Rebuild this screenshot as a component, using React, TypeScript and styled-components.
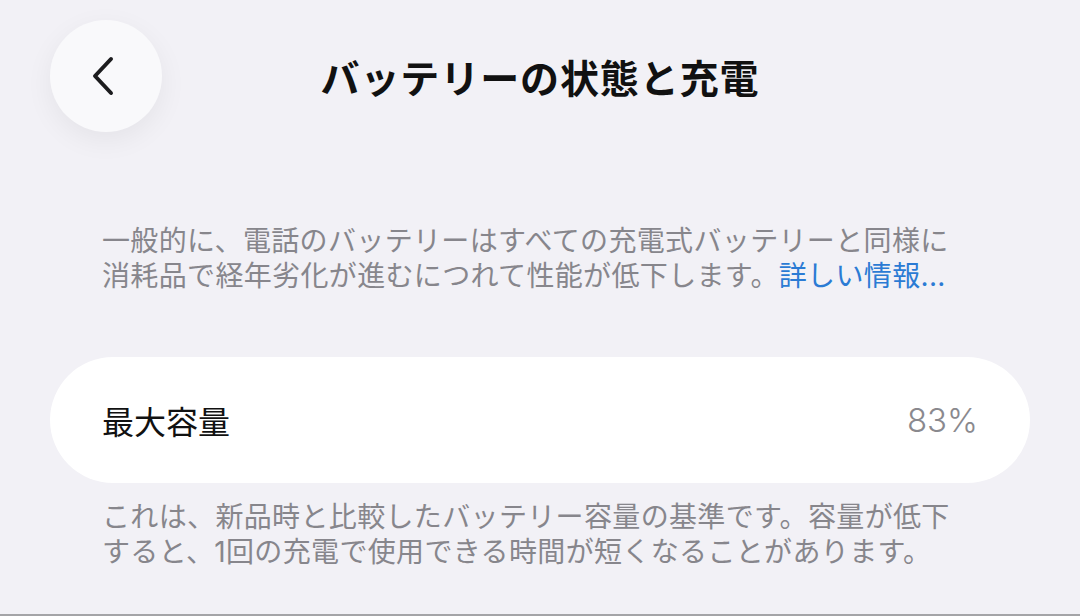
import { createGlobalStyle, styled } from "styled-components";

const GlobalStyle = createGlobalStyle`
  html, body {
    margin: 0;
    padding: 0;
    background: #f2f1f6;
  }
  body {
    font-family: "Inter", "Noto Sans CJK JP", sans-serif;
    -webkit-font-smoothing: antialiased;
  }
`;

const Page = styled.div`
  height: 100vh;
  box-sizing: border-box;
  border-bottom: 2px solid #a4a4a7;
  display: flex;
  flex-direction: column;
  padding: 20px 50px 0;
`;

const Header = styled.header`
  display: grid;
  grid-template-columns: 112px 1fr 112px;
  align-items: center;
`;

const BackButton = styled.button`
  width: 112px;
  height: 112px;
  border-radius: 50%;
  border: none;
  background: #f9f9fb;
  box-shadow: 0 8px 28px rgba(0, 0, 0, 0.06);
  display: flex;
  align-items: center;
  justify-content: center;
  padding: 0 6px 0 0;
  cursor: pointer;
`;

const Title = styled.h1`
  margin: 0;
  text-align: center;
  font-size: 39px;
  font-weight: 700;
  color: #111;
  letter-spacing: 0.9px;
`;

const Note = styled.p<{ $top: number }>`
  margin: ${(p) => p.$top}px 0 0;
  padding: 0 52px;
  font-size: 28px;
  line-height: 35px;
  color: #87868c;
  letter-spacing: 0.35px;
`;

const Link = styled.a`
  color: #2b7bd4;
  text-decoration: none;
`;

const Card = styled.div`
  margin-top: 63px;
  height: 126px;
  border-radius: 63px;
  background: #fff;
  display: flex;
  align-items: center;
  justify-content: space-between;
  padding: 0 52px;
`;

const Label = styled.span`
  font-size: 32px;
  color: #111;
`;

const Value = styled.span`
  font-size: 33px;
  font-weight: 300;
  color: #8a898e;
`;

function Chevron() {
  return (
    <svg width="24" height="40" viewBox="0 0 24 40" fill="none">
      <path
        d="M20 3 L4 20 L20 37"
        stroke="#1c1c1e"
        strokeWidth="4"
        strokeLinecap="round"
        strokeLinejoin="round"
      />
    </svg>
  );
}

export default function App() {
  return (
    <>
      <GlobalStyle />
      <Page>
        <Header>
          <BackButton aria-label="戻る">
            <Chevron />
          </BackButton>
          <Title>バッテリーの状態と充電</Title>
          <span />
        </Header>
        <Note $top={92}>
          一般的に、電話のバッテリーはすべての充電式バッテリーと同様に
          <br />
          消耗品で経年劣化が進むにつれて性能が低下します。
          <Link href="#">詳しい情報...</Link>
        </Note>
        <Card>
          <Label>最大容量</Label>
          <Value>83%</Value>
        </Card>
        <Note $top={17}>
          これは、新品時と比較したバッテリー容量の基準です。容量が低下
          <br />
          すると、1回の充電で使用できる時間が短くなることがあります。
        </Note>
      </Page>
    </>
  );
}
